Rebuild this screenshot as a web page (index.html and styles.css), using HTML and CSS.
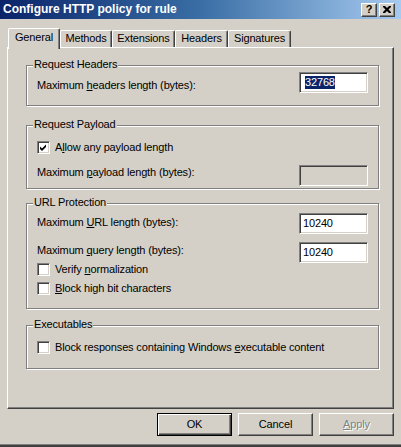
FILE: index.html
```html
<!DOCTYPE html>
<html>
<head>
<meta charset="utf-8">
<title>Configure HTTP policy for rule</title>
<link rel="stylesheet" href="styles.css">
</head>
<body>
<div class="window">
  <div class="titlebar">
    <span class="title">Configure HTTP policy for rule</span>
    <div class="caption-btns">
      <span class="cap-btn cap-help">?</span>
      <span class="cap-btn cap-close"><svg width="8" height="7" viewBox="0 0 8 7"><path d="M0 0h2l2 2 2-2h2v1L5.5 3.5 8 6v1H6L4 5 2 7H0V6l2.5-2.5L0 1z" fill="#000"/></svg></span>
    </div>
  </div>
  <div class="body">
    <div class="tabs">
      <div class="tab tab-sel t-general">General</div>
      <div class="tab t-methods">Methods</div>
      <div class="tab t-ext">Extensions</div>
      <div class="tab t-headers">Headers</div>
      <div class="tab t-sig">Signatures</div>
    </div>
    <div class="panel">
      <div class="group g-headers">
        <span class="legend">Request Headers</span>
        <div class="field-row">
          <span class="lbl lbl-low">Maximum <u>h</u>eaders length (bytes):</span>
          <div class="edit"><span class="sel">32768</span></div>
        </div>
      </div>
      <div class="group g-payload">
        <span class="legend">Request Payload</span>
        <div class="check-row">
          <span class="cb"><svg width="9" height="9" viewBox="0 0 9 9"><path d="M1 3.5L3 5.5 7 1.5V4L3 8 1 6z" fill="#000"/></svg></span>
          <span>A<u>l</u>low any payload length</span>
        </div>
        <div class="field-row row-payload">
          <span class="lbl lbl-up3">Maximum <u>p</u>ayload length (bytes):</span>
          <div class="edit edit-disabled"></div>
        </div>
      </div>
      <div class="group g-url">
        <span class="legend">URL Protection</span>
        <div class="field-row">
          <span class="lbl lbl-up1">Maximum <u>U</u>RL length (bytes):</span>
          <div class="edit">10240</div>
        </div>
        <div class="field-row row-query">
          <span class="lbl lbl-up2">Maximum <u>q</u>uery length (bytes):</span>
          <div class="edit">10240</div>
        </div>
        <div class="check-row">
          <span class="cb"></span>
          <span>Verify <u>n</u>ormalization</span>
        </div>
        <div class="check-row row-highbit">
          <span class="cb"></span>
          <span><u>B</u>lock high bit characters</span>
        </div>
      </div>
      <div class="group g-exec">
        <span class="legend">Executables</span>
        <div class="check-row">
          <span class="cb"></span>
          <span>Block responses containing Windows <u>e</u>xecutable content</span>
        </div>
      </div>
    </div>
    <div class="buttons">
      <div class="btn btn-default">OK</div>
      <div class="btn">Cancel</div>
      <div class="btn btn-disabled"><span><u>A</u>pply</span></div>
    </div>
  </div>
  <div class="edge"></div>
</div>
</body>
</html>
```

FILE: styles.css
```css
html, body {
  margin: 0;
  padding: 0;
  background: #d4d0c8;
}

body {
  font-family: "Liberation Sans", Arial, sans-serif;
  font-size: 11px;
  line-height: 13px;
  letter-spacing: -0.15px;
  color: #000;
}

.window {
  width: 401px;
  height: 447px;
  background: #d4d0c8;
  display: flex;
  flex-direction: column;
  overflow: hidden;
}

/* Title bar */
.titlebar {
  flex: none;
  height: 19px;
  box-sizing: border-box;
  padding: 0 6px 0 3px;
  display: flex;
  align-items: center;
  justify-content: space-between;
  background: linear-gradient(to right, #0a246a 0%, #3a6ea5 50%, #a6caf0 100%);
}

.title {
  color: #fff;
  font-weight: bold;
  font-size: 12px;
  letter-spacing: 0;
}

.caption-btns {
  display: flex;
  gap: 2px;
}

.cap-btn {
  width: 16px;
  height: 14px;
  box-sizing: border-box;
  background: #d4d0c8;
  border: 1px solid;
  border-color: #fff #404040 #404040 #fff;
  box-shadow: inset -1px -1px 0 #808080;
  display: flex;
  align-items: center;
  justify-content: center;
  font-weight: bold;
  font-size: 11px;
  line-height: 11px;
  letter-spacing: 0;
  color: #000;
}

/* Body */
.body {
  flex: 1;
  padding: 9px 7px 0 7px;
  display: flex;
  flex-direction: column;
}

/* Tabs */
.tabs {
  flex: none;
  height: 19px;
  padding-left: 1px;
  display: flex;
  align-items: flex-end;
}

.tab {
  height: 17px;
  box-sizing: border-box;
  border-left: 1px solid #fff;
  border-top: 1px solid #fff;
  border-right: 1px solid #404040;
  box-shadow: inset -1px 0 0 #808080;
  border-radius: 2px 2px 0 0;
  display: flex;
  align-items: center;
  justify-content: center;
  padding-bottom: 1px;
}

.tab-sel {
  height: 21px;
  margin-bottom: -2px;
  position: relative;
  z-index: 1;
  background: #d4d0c8;
  padding-bottom: 3px;
}

.t-general { width: 52px; }
.t-methods { width: 52px; }
.t-ext { width: 63px; }
.t-headers { width: 53px; }
.t-sig { width: 63px; }

/* Panel */
.panel {
  flex: none;
  height: 362px;
  box-sizing: border-box;
  border: 1px solid;
  border-color: #fff #404040 #404040 #fff;
  box-shadow: inset -1px -1px 0 #808080;
  padding: 17px 14px 0 18px;
  display: flex;
  flex-direction: column;
}

/* Group boxes */
.group {
  position: relative;
  border: 1px solid #808080;
  box-shadow: inset 1px 1px 0 #fff, 1px 1px 0 #fff;
  padding: 0 10px;
  display: flex;
  flex-direction: column;
}

.legend {
  position: absolute;
  top: -8px;
  left: 6px;
  padding: 0 1px;
  background: #d4d0c8;
  line-height: 13px;
}

.g-headers { padding-top: 6px; padding-bottom: 12px; }
.g-payload { margin-top: 19px; padding-top: 15px; padding-bottom: 2px; }
.g-url { margin-top: 14px; padding-top: 9px; padding-bottom: 13px; }
.g-exec { margin-top: 16px; padding-top: 15px; padding-bottom: 14px; }

.field-row {
  height: 21px;
  display: flex;
  align-items: center;
  justify-content: space-between;
}

.row-payload { margin-top: 11px; }
.row-query { margin-top: 8px; }
.row-highbit { margin-top: 6px; }

.lbl-low { margin-top: 6px; }
.lbl-up3 { margin-bottom: 6px; }
.lbl-up1 { margin-bottom: 2px; }
.lbl-up2 { margin-bottom: 4px; }

.edit {
  width: 69px;
  height: 21px;
  box-sizing: border-box;
  border: 1px solid;
  border-color: #808080 #fff #fff #808080;
  box-shadow: inset 1px 1px 0 #404040, inset -1px -1px 0 #d4d0c8;
  background: #fff;
  padding-left: 3px;
  display: flex;
  align-items: center;
}

.edit-disabled {
  background: #d4d0c8;
}

.sel {
  background: #0a246a;
  color: #fff;
  line-height: 13px;
  margin-left: 2px;
}

.check-row {
  height: 13px;
  display: flex;
  align-items: center;
  gap: 5px;
}

.cb {
  flex: none;
  width: 13px;
  height: 13px;
  box-sizing: border-box;
  border: 1px solid;
  border-color: #808080 #fff #fff #808080;
  box-shadow: inset 1px 1px 0 #404040, inset -1px -1px 0 #d4d0c8;
  background: #fff;
  padding: 1px;
  display: flex;
}

.cb svg {
  display: block;
}

/* Buttons */
.buttons {
  flex: none;
  margin-top: 4px;
  display: flex;
  justify-content: flex-end;
  gap: 6px;
}

.btn {
  width: 75px;
  height: 23px;
  box-sizing: border-box;
  border: 1px solid;
  border-color: #fff #404040 #404040 #fff;
  box-shadow: inset -1px -1px 0 #808080;
  display: flex;
  align-items: center;
  justify-content: center;
}

.btn-default {
  border-color: #000;
  box-shadow: inset 1px 1px 0 #fff, inset -1px -1px 0 #404040, inset -2px -2px 0 #808080;
}

.btn-disabled {
  color: #808080;
  text-shadow: 1px 1px 0 #fff;
}

.edge {
  flex: none;
  height: 3px;
  box-sizing: border-box;
  border-top: 1px solid #808080;
  background: #404040;
}
```
